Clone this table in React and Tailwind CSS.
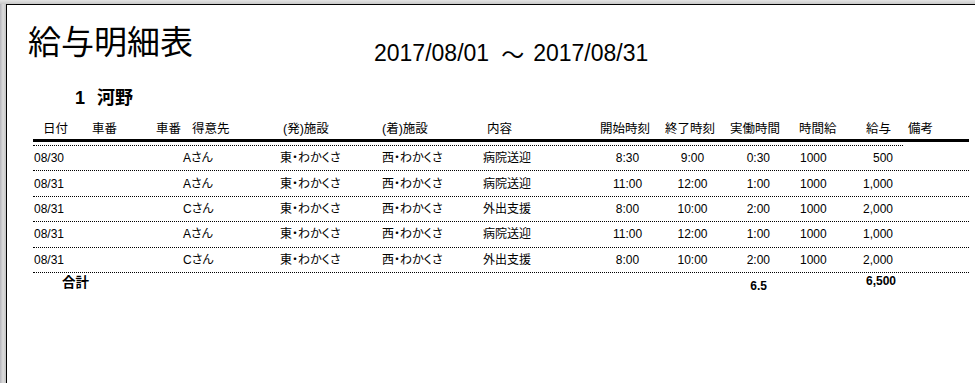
const rows = [
  { date: "08/30", client: "Aさん", from: "東・わかくさ", to: "西・わかくさ", kind: "病院送迎", start: "8:30", end: "9:00", work: "0:30", rate: "1000", pay: "500" },
  { date: "08/31", client: "Aさん", from: "東・わかくさ", to: "西・わかくさ", kind: "病院送迎", start: "11:00", end: "12:00", work: "1:00", rate: "1000", pay: "1,000" },
  { date: "08/31", client: "Cさん", from: "東・わかくさ", to: "西・わかくさ", kind: "外出支援", start: "8:00", end: "10:00", work: "2:00", rate: "1000", pay: "2,000" },
  { date: "08/31", client: "Aさん", from: "東・わかくさ", to: "西・わかくさ", kind: "病院送迎", start: "11:00", end: "12:00", work: "1:00", rate: "1000", pay: "1,000" },
  { date: "08/31", client: "Cさん", from: "東・わかくさ", to: "西・わかくさ", kind: "外出支援", start: "8:00", end: "10:00", work: "2:00", rate: "1000", pay: "2,000" },
]

const grid =
  "grid grid-cols-[47px_70px_30px_95px_103px_102px_115px_65px_65px_65px_60px_50px_69px]"

const App = () => {
  return (
    <div className="w-[975px] h-[383px] flex flex-col bg-[#d6d6d6] overflow-hidden">
      <div className="h-[4px] shrink-0 bg-gradient-to-b from-[#e4e4e4] to-[#c9c9c9]" />
      <div className="flex flex-1">
        <div className="w-[6px] shrink-0 bg-gradient-to-r from-[#b4b4ba] via-[#dcdcdc] to-[#c4c4c4]" />
        <div className="flex-1 bg-white border-t border-l border-black text-black font-['Liberation_Sans','Noto_Sans_CJK_JP',sans-serif] [font-feature-settings:'palt']">
          <div className="flex items-start">
            <h1 className="ml-[21px] mt-[19px] text-[33px] leading-none font-normal font-['Noto_Sans_CJK_JP',sans-serif] [font-feature-settings:normal]">
              給与明細表
            </h1>
            <div className="ml-[181px] mt-[37px] flex items-start text-[23px] leading-none">
              <span>2017/08/01</span>
              <span className="ml-[12px] font-['Noto_Sans_CJK_JP',sans-serif] [font-feature-settings:normal]">～</span>
              <span className="ml-[9px]">2017/08/31</span>
            </div>
          </div>

          <div className="mt-[24px] ml-[68px] flex items-start text-[18px] leading-none font-bold">
            <span>1</span>
            <span className="ml-[12px]">河野</span>
          </div>

          <div className="ml-[26px] w-[936px]">
            <div className={`${grid} mt-[12px] h-[20px] items-center text-[12.5px] leading-[16px] whitespace-nowrap`}>
              <div className="pl-[10px]">日付</div>
              <div className="pl-[12px]">車番</div>
              <div className="pl-[6px]">車番</div>
              <div className="pl-[12px]">得意先</div>
              <div className="pl-[8px]">(発)施設</div>
              <div className="pl-[4px]">(着)施設</div>
              <div className="pl-[7px]">内容</div>
              <div className="pl-[5px]">開始時刻</div>
              <div className="pl-[5px]">終了時刻</div>
              <div className="pl-[5px]">実働時間</div>
              <div className="pl-[9px]">時間給</div>
              <div className="pl-[16px]">給与</div>
              <div className="pl-[8px]">備考</div>
            </div>
            <div className="h-[3px] bg-black" />
            <div className="mt-[3px] w-[870px] border-t border-dotted border-black" />

            {rows.map((r, i) => (
              <div
                key={i}
                className={`${grid} h-[25.4px] items-center border-b border-dotted border-black text-[12px] leading-[16px] whitespace-nowrap`}
              >
                <div className="pl-[1px]">{r.date}</div>
                <div />
                <div />
                <div className="pl-[3px]">{r.client}</div>
                <div className="pl-[5px]">{r.from}</div>
                <div className="pl-[4px]">{r.to}</div>
                <div className="pl-[3px]">{r.kind}</div>
                <div className="text-center">{r.start}</div>
                <div className="text-center">{r.end}</div>
                <div className="text-right pr-[20px]">{r.work}</div>
                <div className="pl-[10px]">{r.rate}</div>
                <div className="text-right pr-[7px]">{r.pay}</div>
                <div />
              </div>
            ))}

            <div className={`${grid} h-[24px] items-start text-[12px] leading-[14px] font-bold whitespace-nowrap`}>
              <div className="col-span-4 pl-[29px] pt-[3px] text-[13.5px]">合計</div>
              <div />
              <div />
              <div />
              <div />
              <div />
              <div className="text-right pr-[23px] pt-[6px]">6.5</div>
              <div />
              <div className="text-right pr-[4px] pt-[1px]">6,500</div>
              <div />
            </div>
          </div>
        </div>
      </div>
    </div>
  )
}

export default App
